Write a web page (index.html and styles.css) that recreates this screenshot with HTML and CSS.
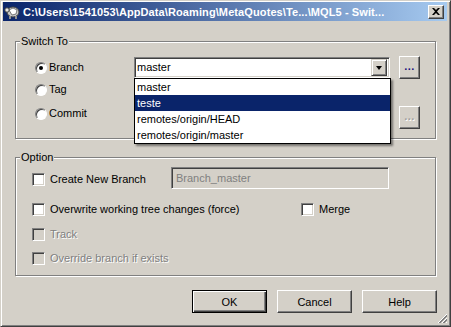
FILE: index.html
```html
<!DOCTYPE html>
<html lang="en">
<head>
    <meta charset="UTF-8">
    <title>Switch/Checkout</title>
    <link rel="stylesheet" href="styles.css">
</head>
<body>
    <div class="window">
        <div class="titlebar">
            <svg class="app-icon" width="16" height="16" viewBox="0 0 16 16">
                <ellipse cx="9" cy="8" rx="6" ry="5" fill="#c8c8c8" stroke="#404040"/>
                <path d="M5 6 L9 4 L13 6 L12 10 L8 11 Z" fill="#fff" stroke="#606060" stroke-width="0.8"/>
                <circle cx="3" cy="6" r="2.2" fill="#e8e8e8" stroke="#404040"/>
                <rect x="5" y="12" width="2" height="3" fill="#909090"/>
                <rect x="11" y="12" width="2" height="3" fill="#909090"/>
            </svg>
            <span class="title">C:\Users\1541053\AppData\Roaming\MetaQuotes\Te...\MQL5 - Swit...</span>
            <div class="close-btn">
                <svg width="8" height="7" viewBox="0 0 8 7">
                    <path d="M0 0 H2 L4 2 L6 0 H8 L5 3.5 L8 7 H6 L4 5 L2 7 H0 L3 3.5 Z" fill="#000"/>
                </svg>
            </div>
        </div>

        <div class="content">
            <div class="group switch-group">
                <span class="group-title">Switch To</span>
                <div class="switch-row row-branch">
                    <label class="radio-label"><span class="radio checked"></span>Branch</label>
                    <div class="combo">
                        <span class="combo-value">master</span>
                        <span class="combo-arrow"><span class="tri"></span></span>
                        <ul class="dropdown">
                            <li>master</li>
                            <li class="selected">teste</li>
                            <li>remotes/origin/HEAD</li>
                            <li>remotes/origin/master</li>
                        </ul>
                    </div>
                    <div class="btn dots">...</div>
                </div>
                <div class="switch-row row-tag">
                    <label class="radio-label"><span class="radio"></span>Tag</label>
                </div>
                <div class="switch-row row-commit">
                    <label class="radio-label"><span class="radio"></span>Commit</label>
                    <span></span>
                    <div class="btn dots disabled">...</div>
                </div>
            </div>

            <div class="group option-group">
                <span class="group-title">Option</span>
                <div class="opt-row row-create">
                    <label class="check-label create-label"><span class="check"></span>Create New Branch</label>
                    <div class="textbox">Branch_master</div>
                </div>
                <div class="opt-row row-overwrite">
                    <label class="check-label overwrite-label"><span class="check"></span>Overwrite working tree changes (force)</label>
                    <label class="check-label"><span class="check"></span>Merge</label>
                </div>
                <div class="opt-row row-track">
                    <label class="check-label disabled"><span class="check"></span>Track</label>
                </div>
                <div class="opt-row row-override">
                    <label class="check-label disabled"><span class="check"></span>Override branch if exists</label>
                </div>
            </div>

            <div class="buttons">
                <div class="btn default">OK</div>
                <div class="btn">Cancel</div>
                <div class="btn">Help</div>
            </div>
        </div>

        <svg class="grip" width="11" height="11" viewBox="0 0 11 11">
            <path d="M10 1 L1 10 M10 5 L5 10 M10 9 L9 10" stroke="#fff" stroke-width="1"/>
            <path d="M10 2 L2 10 M10 3 L3 10 M10 6 L6 10 M10 7 L7 10" stroke="#808080" stroke-width="1"/>
        </svg>
    </div>
</body>
</html>
```

FILE: styles.css
```css
* {
    margin: 0;
    padding: 0;
    box-sizing: border-box;
}

body {
    background: #d4d0c8;
    font-family: 'Liberation Sans', Arial, sans-serif;
    font-size: 11px;
    color: #000;
}

.window {
    position: relative;
    width: 451px;
    height: 327px;
    background: #d4d0c8;
    border: 1px solid;
    border-color: #d4d0c8 #404040 #404040 #d4d0c8;
    box-shadow: inset 1px 1px 0 #fff, inset -1px -1px 0 #808080;
    padding: 1px 3px 2px 2px;
    display: flex;
    flex-direction: column;
}

/* title bar */
.titlebar {
    height: 19px;
    display: flex;
    align-items: center;
    background: linear-gradient(to right, #0a246a, #a6caf0);
    color: #fff;
}

.app-icon {
    margin-left: 1px;
    margin-right: 3px;
    flex: none;
}

.title {
    font-weight: bold;
    font-size: 11px;
    white-space: nowrap;
    letter-spacing: 0.1px;
}

.close-btn {
    margin-left: auto;
    margin-right: 3px;
    width: 16px;
    height: 14px;
    background: #d4d0c8;
    border: 1px solid;
    border-color: #fff #404040 #404040 #fff;
    box-shadow: inset -1px -1px 0 #808080;
    display: flex;
    align-items: center;
    justify-content: center;
}

/* content */
.content {
    flex: 1;
    padding: 0 11px 0 12px;
    display: flex;
    flex-direction: column;
}

.group {
    position: relative;
    border: 1px solid #808080;
    box-shadow: 1px 1px 0 #fff, inset 1px 1px 0 #fff;
}

.group-title {
    position: absolute;
    top: -7px;
    left: 4px;
    padding: 0 1px;
    background: #d4d0c8;
    line-height: 13px;
}

.switch-group {
    margin-top: 20px;
    padding: 14px 0 9px 19px;
}

.switch-row {
    display: grid;
    grid-template-columns: 90px 256px 21px;
    column-gap: 9px;
    align-items: center;
}

.row-branch { height: 23px; }
.row-tag { height: 21px; }
.row-commit {
    height: 25px;
    margin-top: 4px;
}
.row-commit .radio-label { align-self: start; margin-top: 3px; }
.row-commit .dots { align-self: end; }

.radio-label,
.check-label {
    display: flex;
    align-items: center;
    line-height: 13px;
    white-space: nowrap;
}

.radio {
    position: relative;
    width: 12px;
    height: 12px;
    margin-right: 2px;
    border-radius: 50%;
    background: #fff;
    border: 1px solid;
    border-color: #808080 #fff #fff #808080;
    box-shadow: inset 1px 1px 0 #404040;
}

.radio.checked::after {
    content: '';
    position: absolute;
    left: 3px;
    top: 3px;
    width: 4px;
    height: 4px;
    border-radius: 50%;
    background: #000;
}

/* combo box */
.combo {
    position: relative;
    height: 21px;
    background: #fff;
    border: 1px solid;
    border-color: #808080 #fff #fff #808080;
    box-shadow: inset 1px 1px 0 #404040, inset -1px -1px 0 #d4d0c8;
    display: flex;
    align-items: center;
    padding: 0 2px 0 2px;
}

.combo-value {
    flex: 1;
    line-height: 13px;
}

.combo-arrow {
    width: 16px;
    height: 17px;
    background: #d4d0c8;
    border: 1px solid;
    border-color: #d4d0c8 #404040 #404040 #d4d0c8;
    box-shadow: inset 1px 1px 0 #fff, inset -1px -1px 0 #808080;
    display: flex;
    align-items: center;
    justify-content: center;
}

.tri {
    width: 0;
    height: 0;
    border-left: 3.5px solid transparent;
    border-right: 3.5px solid transparent;
    border-top: 4px solid #000;
}

.dropdown {
    position: absolute;
    top: 20px;
    left: -1px;
    width: 257px;
    list-style: none;
    background: #fff;
    border: 1px solid #000;
    box-shadow: 2px 2px 2px rgba(0, 0, 0, 0.45);
    z-index: 2;
}

.dropdown li {
    height: 16px;
    line-height: 16px;
    padding-left: 2px;
}

.dropdown li.selected {
    background: #0a246a;
    color: #fff;
}

/* buttons */
.btn {
    width: 75px;
    height: 23px;
    background: #d4d0c8;
    border: 1px solid;
    border-color: #fff #404040 #404040 #fff;
    box-shadow: inset -1px -1px 0 #808080;
    display: flex;
    align-items: center;
    justify-content: center;
}

.btn.dots {
    width: 21px;
    height: 23px;
    color: #1c1080;
    font-weight: bold;
    letter-spacing: 0.5px;
    padding-bottom: 3px;
}

.btn.dots.disabled {
    color: #a0a0a0;
    text-shadow: 1px 1px 0 #fff;
}

.btn.default {
    border: 1px solid #000;
    box-shadow: inset 1px 1px 0 #fff, inset -1px -1px 0 #404040, inset -2px -2px 0 #808080;
}

/* option group */
.option-group {
    margin-top: 18px;
    padding: 9px 0 7px 16px;
}

.opt-row {
    display: flex;
    align-items: center;
    height: 20px;
}

.row-create { height: 22px; }
.row-create .create-label { width: 139px; margin-top: 3px; }
.row-overwrite { margin-top: 10px; }
.overwrite-label { width: 269px; }
.row-track { margin-top: 5px; }
.row-override { margin-top: 4px; }

.check {
    width: 13px;
    height: 13px;
    margin-right: 5px;
    background: #fff;
    border: 1px solid;
    border-color: #808080 #fff #fff #808080;
    box-shadow: inset 1px 1px 0 #404040, inset -1px -1px 0 #d4d0c8;
}

.check-label.disabled {
    color: #808080;
    text-shadow: 1px 1px 0 #fff;
}

.check-label.disabled .check {
    background: #d4d0c8;
}

.textbox {
    width: 218px;
    height: 22px;
    background: #d4d0c8;
    color: #808080;
    border: 1px solid;
    border-color: #808080 #fff #fff #808080;
    box-shadow: inset 1px 1px 0 #404040, inset -1px -1px 0 #d4d0c8;
    padding-left: 4px;
    display: flex;
    align-items: center;
}

.buttons {
    margin-top: 14px;
    margin-right: -1px;
    display: flex;
    justify-content: flex-end;
    gap: 10px;
}

.grip {
    position: absolute;
    right: 2px;
    bottom: 2px;
}
```
